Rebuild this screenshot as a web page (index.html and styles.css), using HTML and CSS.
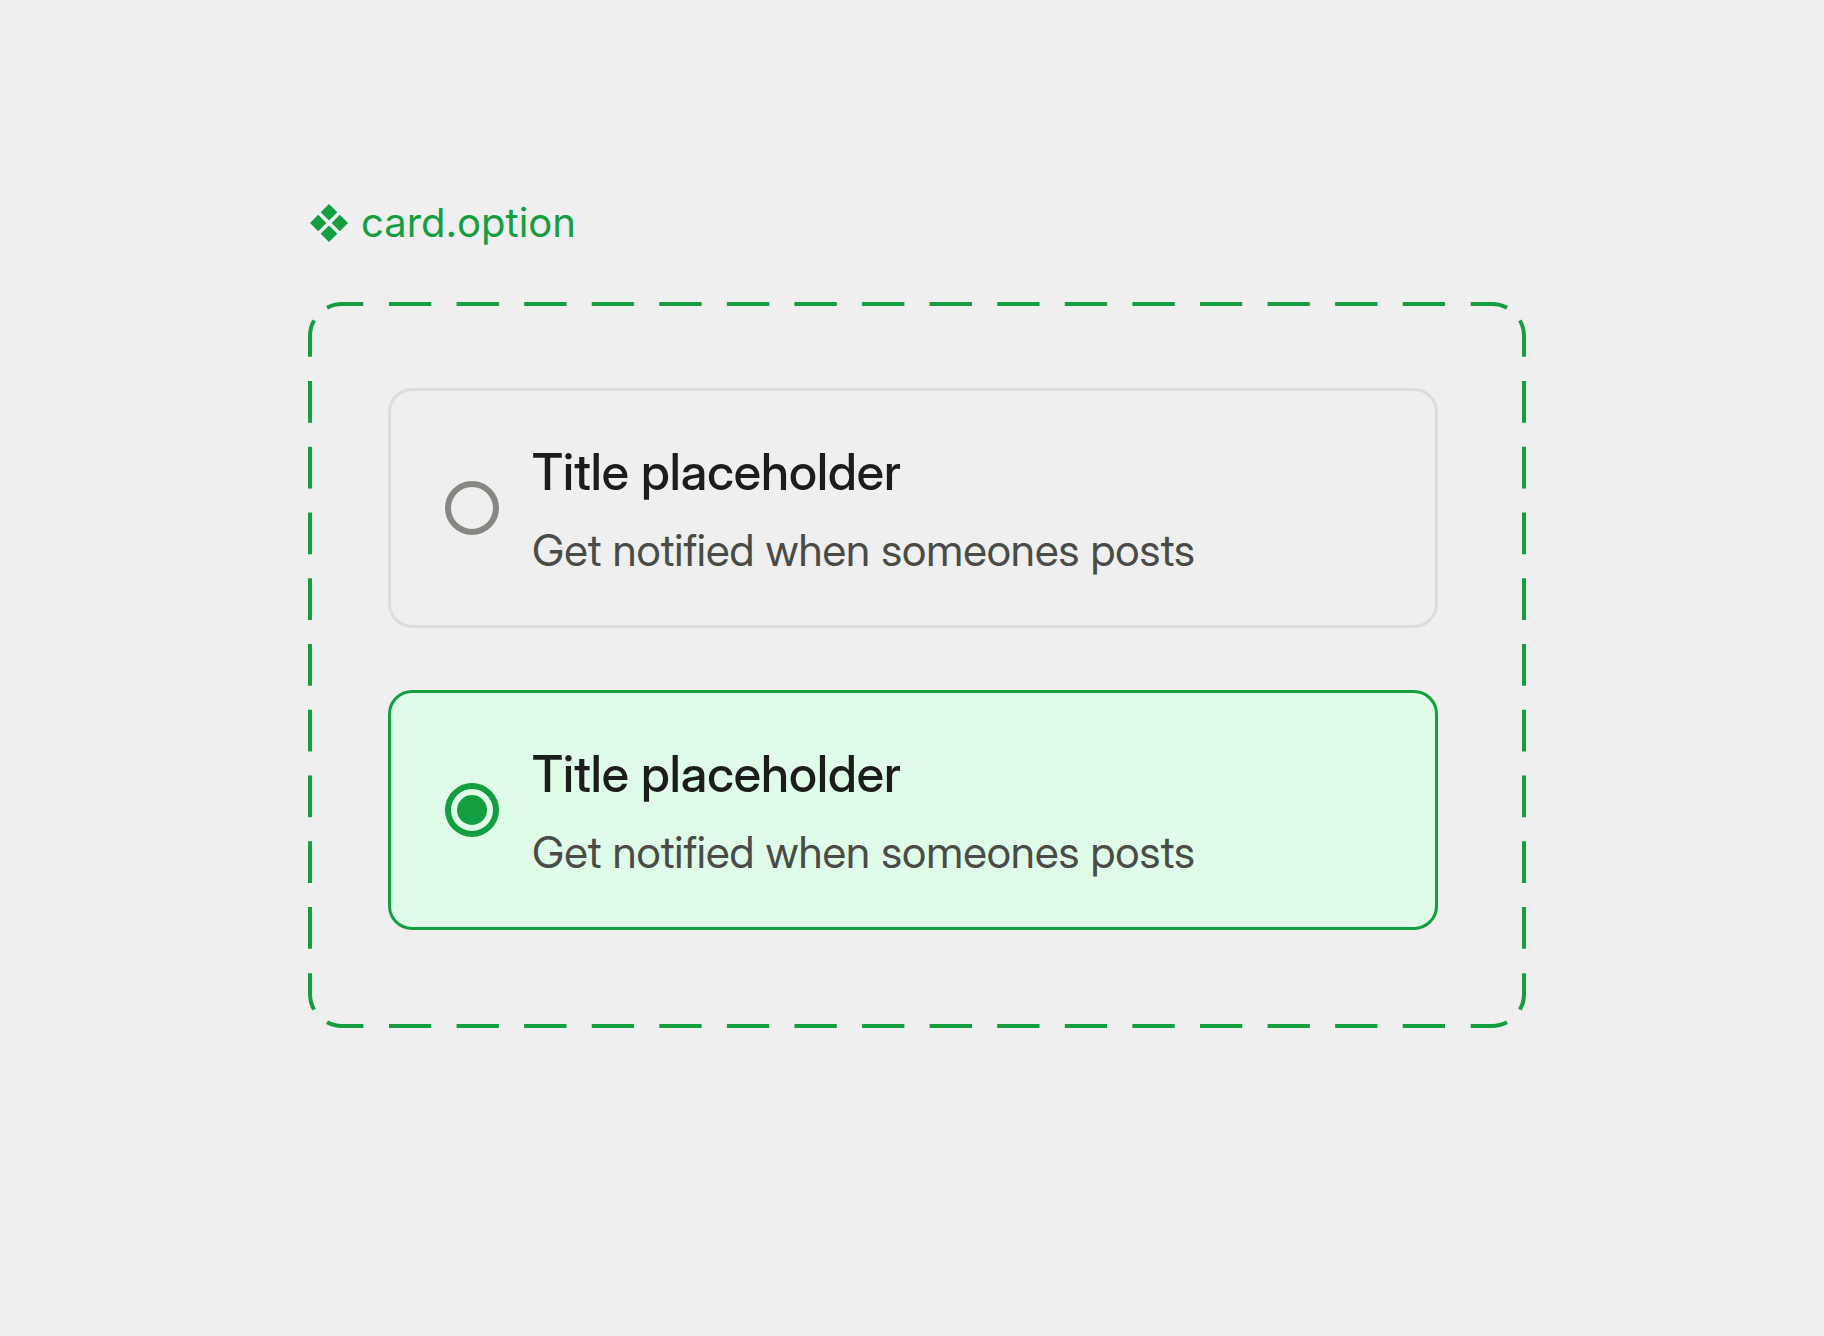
FILE: index.html
```html
<!DOCTYPE html>
<html lang="en">
<head>
  <meta charset="utf-8">
  <meta name="viewport" content="width=device-width, initial-scale=1">
  <title>card.option</title>
  <link rel="stylesheet" href="styles.css">
</head>
<body>
  <main class="component">
    <h1 class="component-name">
      <svg class="component-icon" viewBox="0 0 38 38" aria-hidden="true">
        <path d="M19 0 27.3 8.2 19 16.4 10.7 8.2ZM19 21.6 27.3 29.8 19 38 10.7 29.8ZM8.2 10.7 16.4 19 8.2 27.3 0 19ZM29.8 10.7 38 19 29.8 27.3 21.6 19Z"/>
      </svg>
      card.option
    </h1>
    <div class="frame">
      <svg class="frame-outline" viewBox="0 0 1218 726" preserveAspectRatio="none" aria-hidden="true">
        <defs>
          <path id="corner" stroke-dasharray="37 18.3 37" d="M2 54.7V34A32 32 0 0 1 34 2H55.3"/>
          <path id="edge-x" stroke-dasharray="42.3 25.28" d="M81 2H1137"/>
          <path id="edge-y" stroke-dasharray="41.7 24.04" d="M2 79.1V646.9"/>
        </defs>
        <use href="#corner"/>
        <use href="#corner" transform="translate(1218 0) scale(-1 1)"/>
        <use href="#corner" transform="translate(0 726) scale(1 -1)"/>
        <use href="#corner" transform="translate(1218 726) scale(-1 -1)"/>
        <use href="#edge-x"/>
        <use href="#edge-x" transform="translate(0 722)"/>
        <use href="#edge-y"/>
        <use href="#edge-y" transform="translate(1214 0)"/>
      </svg>
      <label class="option" for="option-1">
        <input class="option-radio" type="radio" id="option-1" name="option">
        <span class="option-text">
          <span class="option-title">Title placeholder</span>
          <span class="option-description">Get notified when someones posts</span>
        </span>
      </label>
      <label class="option" for="option-2">
        <input class="option-radio" type="radio" id="option-2" name="option" checked>
        <span class="option-text">
          <span class="option-title">Title placeholder</span>
          <span class="option-description">Get notified when someones posts</span>
        </span>
      </label>
    </div>
  </main>
</body>
</html>
```

FILE: styles.css
```css
:root {
  --green: #149e40;
  --green-soft: #dffce8;
  --surface: #efefef;
  --line: #dcdeda;
  --control: #858781;
  --text: #1b1d1a;
  --text-muted: #494b47;
}

* {
  box-sizing: border-box;
}

body {
  margin: 0;
  padding: 200px 0 200px 10px;
  background: var(--surface);
  color: var(--text);
  font-family: Inter, "Liberation Sans", sans-serif;
}

.component {
  max-width: 1218px;
  margin: 0 auto;
}

.component-name {
  display: flex;
  align-items: center;
  gap: 13px;
  margin: 0 0 56px;
  padding-left: 2px;
  color: var(--green);
  font-size: 40px;
  font-weight: 400;
  line-height: 46px;
}

.component-icon {
  width: 38px;
  height: 38px;
  fill: currentColor;
}

.frame {
  position: relative;
  display: flex;
  flex-direction: column;
  gap: 62px;
  padding: 86px 88px 98px 80px;
}

.frame-outline {
  position: absolute;
  inset: 0;
  width: 100%;
  height: 100%;
  fill: none;
  stroke: var(--green);
  stroke-width: 4;
  pointer-events: none;
}

.option {
  display: flex;
  align-items: center;
  gap: 33px;
  padding: 45px 54px;
  border: 3px solid var(--line);
  border-radius: 24px;
  cursor: pointer;
}

.option:has(:checked) {
  border-color: var(--green);
  background: var(--green-soft);
}

.option-radio {
  appearance: none;
  flex: none;
  width: 54px;
  height: 54px;
  margin: 0;
  padding: 6px;
  border: 6px solid var(--control);
  border-radius: 50%;
}

.option-radio:checked {
  border-color: var(--green);
  background: var(--green) content-box;
}

.option-text {
  display: flex;
  flex-direction: column;
  gap: 12px;
  font-family: "Inter Display", Inter, "Liberation Sans", sans-serif;
}

.option-title {
  font-size: 50px;
  font-weight: 500;
  line-height: 72px;
}

.option-description {
  color: var(--text-muted);
  font-size: 44px;
  line-height: 60px;
}
```
